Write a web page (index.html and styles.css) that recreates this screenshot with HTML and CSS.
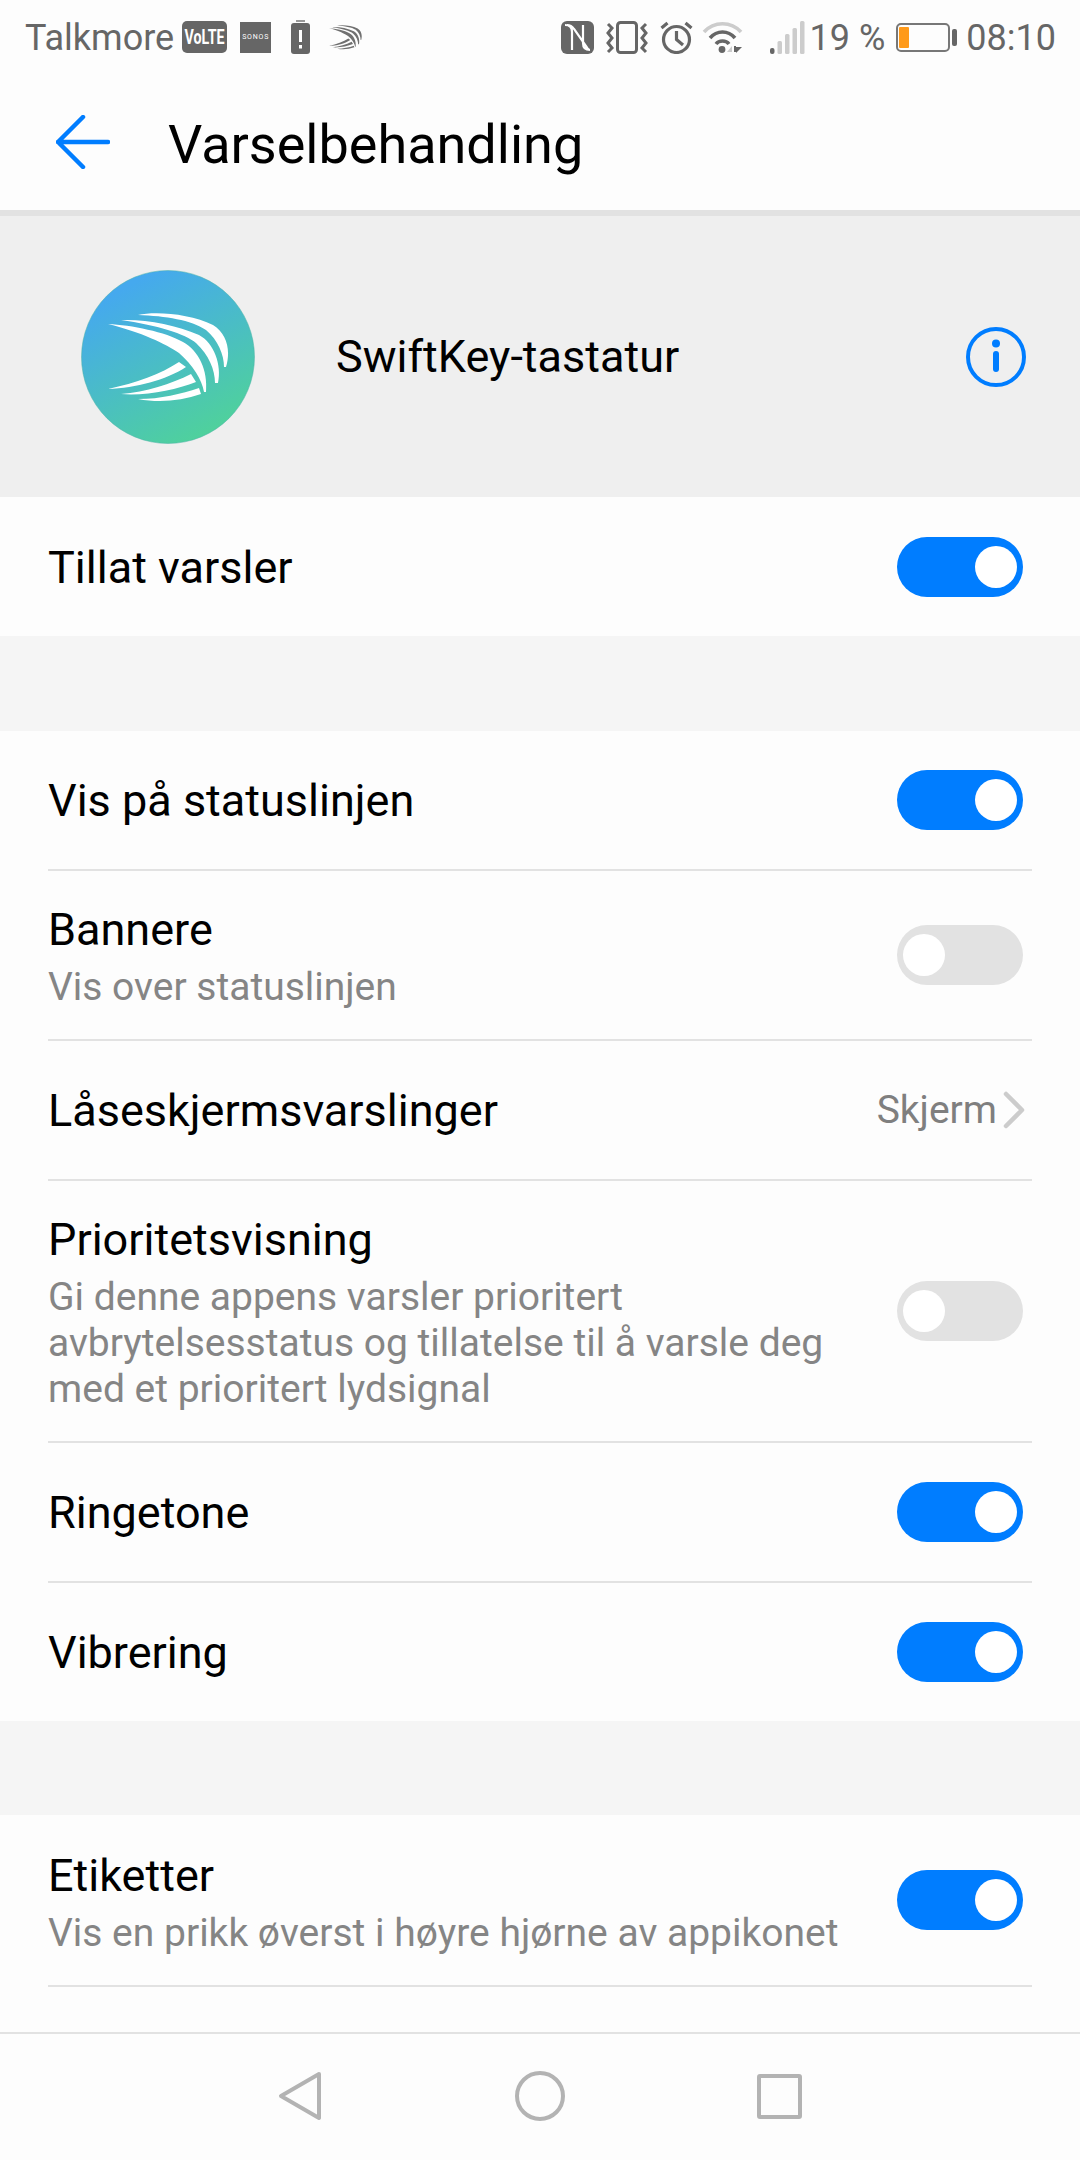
FILE: index.html
```html
<!DOCTYPE html>
<html lang="no">
<head>
<meta charset="utf-8">
<title>Varselbehandling</title>
<link rel="stylesheet" href="styles.css">
</head>
<body>
<svg class="defs" width="0" height="0">
  <symbol id="swift" viewBox="27 43 121 90">
    <path d="M27 54C50 55 85 62 102 72C118 81 127 100 125 122L123 122C121 110 112 95 98 83C85 74 60 62 27 54Z"/>
    <path d="M40 50C65 49 95 55 118 65C133 73 141 95 137 113L134 113C134 100 128 85 115 73C105 64 75 55 40 50Z"/>
    <path d="M57 45C75 41 110 44 132 55C146 64 150 80 145 97L143 97C143 85 137 70 125 60C110 50 85 46 57 45Z"/>
    <path d="M27 119C55 113 80 104 98 92L105 97C85 110 55 118 27 119Z"/>
    <path d="M40 124C65 122 90 114 110 104L115 112C95 120 65 126 40 124Z"/>
    <path d="M57 129C80 129 100 124 118 118L120 124C100 131 78 133 57 129Z"/>
  </symbol>
</svg>
<div class="phone">
  <div class="status">
    <span class="carrier">Talkmore</span>
    <span class="volte"><span class="volte-text">VoLTE</span></span>
    <span class="sonos">SONOS</span>
    <svg class="ic-batalert" viewBox="0 0 19 34"><rect x="5" y="0" width="9" height="2" fill="#999"/><rect x="0" y="3" width="19" height="31" rx="3" fill="#666"/><rect x="8" y="10" width="3" height="12" fill="#fff"/><rect x="8" y="25" width="3" height="3.5" fill="#fff"/></svg>
    <svg class="ic-swift"><use href="#swift"/></svg>
    <span class="status-gap"></span>
    <svg class="ic-nfc" viewBox="0 0 33 33"><rect width="33" height="33" rx="6" fill="#666"/><path d="M4 4C9 4 11 6 11 11V29M29 29C24 29 22 27 22 22V4M6 4C9 4 11 5 13 8L25 25C26 27 27 29 29 29" fill="none" stroke="#fff" stroke-width="2.2"/></svg>
    <svg class="ic-vibrate" viewBox="0 0 42 33" fill="none" stroke="#666" stroke-width="3"><rect x="11.5" y="1.5" width="19" height="30" rx="3"/><path d="M2 3L6 7L2 12L6 17L2 22L6 27L2 31M40 3L36 7L40 12L36 17L40 22L36 27L40 31" stroke-width="3"/></svg>
    <svg class="ic-alarm" viewBox="0 0 33 33" fill="none" stroke="#666" stroke-width="3.2"><circle cx="16.5" cy="18.5" r="13"/><path d="M16.5 10V18.5L23 24M1.5 7L7.5 2M31.5 7L25.5 2"/></svg>
    <svg class="ic-wifi" viewBox="0 0 41 32" fill="none" stroke-width="3.6"><path d="M2 11C12 0 29 0 39 11" stroke="#ccc"/><path d="M8 17C15 9 26 9 33 17" stroke="#666"/><path d="M14 23C17 19 24 19 27 23" stroke="#666"/><circle cx="20" cy="28.5" r="3.4" fill="#666" stroke="none"/><path d="M30 25L25 31H30Z" fill="#ccc" stroke="none"/><rect x="32" y="25" width="2" height="6" fill="#666" stroke="none"/><path d="M34 26H40L34 32Z" fill="#666" stroke="none"/></svg>
    <svg class="ic-signal" viewBox="0 0 35 33"><rect x="0" y="27" width="4.5" height="6" rx="2" fill="#666"/><rect x="7.5" y="20" width="4.5" height="13" rx="1.5" fill="#ccc"/><rect x="15" y="13" width="4.5" height="20" rx="1.5" fill="#ccc"/><rect x="22.5" y="7" width="4.5" height="26" rx="1.5" fill="#ccc"/><rect x="30" y="0" width="4.5" height="33" rx="1.5" fill="#ccc"/></svg>
    <span class="pct">19 %</span>
    <svg class="ic-battery" viewBox="0 0 61 29"><rect x="1" y="1" width="52" height="27" rx="4" fill="none" stroke="#777" stroke-width="2"/><rect x="3" y="4" width="10" height="21" rx="1" fill="#ff9a1a"/><rect x="56" y="6" width="5" height="17" rx="2" fill="#666"/></svg>
    <span class="clock">08:10</span>
  </div>

  <header class="appbar">
    <svg class="back" viewBox="0 0 54 54" fill="none" stroke="#007dff" stroke-width="4.5" stroke-linecap="round" stroke-linejoin="round"><path d="M27 2L2 27L27 52M2 27H52"/></svg>
    <h1 class="title">Varselbehandling</h1>
  </header>

  <div class="scroll">
    <section class="apphead">
      <svg class="logo" viewBox="0 0 174 174">
        <defs><linearGradient id="lg" x1="0.25" y1="0.1" x2="0.72" y2="0.95"><stop offset="0" stop-color="#45a9ee"/><stop offset="1" stop-color="#4fd19c"/></linearGradient></defs>
        <circle cx="87" cy="87" r="86.5" fill="url(#lg)" stroke="#4bb3a8" stroke-opacity=".5"/>
        <svg class="logo-mark" x="27" y="43" width="121" height="90"><use href="#swift" width="121" height="90"/></svg>
      </svg>
      <span class="appname">SwiftKey-tastatur</span>
      <svg class="info" viewBox="0 0 60 60"><circle cx="30" cy="30" r="28" fill="none" stroke="#007dff" stroke-width="4"/><circle cx="30" cy="16.5" r="4" fill="#007dff"/><rect x="27" y="24" width="6" height="21" rx="3" fill="#007dff"/></svg>
    </section>

    <section class="group">
      <div class="row"><div class="text"><div class="label">Tillat varsler</div></div><span class="toggle on"></span></div>
    </section>

    <section class="group">
      <div class="row"><div class="text"><div class="label">Vis på statuslinjen</div></div><span class="toggle on"></span></div>
      <div class="row"><div class="text two"><div class="label">Bannere</div><div class="sub">Vis over statuslinjen</div></div><span class="toggle"></span></div>
      <div class="row"><div class="text"><div class="label">Låseskjermsvarslinger</div></div><span class="value">Skjerm</span><svg class="chev" viewBox="0 0 22 38" fill="none" stroke="#ccc" stroke-width="4.5" stroke-linecap="round" stroke-linejoin="round"><path d="M3 3L19 19L3 35"/></svg></div>
      <div class="row"><div class="text two"><div class="label">Prioritetsvisning</div><div class="sub">Gi denne appens varsler prioritert avbrytelsesstatus og tillatelse til å varsle deg med et prioritert lydsignal</div></div><span class="toggle"></span></div>
      <div class="row"><div class="text"><div class="label">Ringetone</div></div><span class="toggle on"></span></div>
      <div class="row"><div class="text"><div class="label">Vibrering</div></div><span class="toggle on"></span></div>
    </section>

    <section class="group tail">
      <div class="row"><div class="text two"><div class="label">Etiketter</div><div class="sub">Vis en prikk øverst i høyre hjørne av appikonet</div></div><span class="toggle on"></span></div>
    </section>
  </div>

  <nav class="navbar">
    <svg class="nav-back" viewBox="0 0 44 50" fill="none" stroke="#b3b3b3" stroke-width="4" stroke-linejoin="round"><path d="M41 3L3 25L41 47Z"/></svg>
    <svg class="nav-home" viewBox="0 0 50 50" fill="none" stroke="#b3b3b3" stroke-width="4"><circle cx="25" cy="25" r="23"/></svg>
    <svg class="nav-recent" viewBox="0 0 45 45" fill="none" stroke="#b3b3b3" stroke-width="4" stroke-linejoin="round"><rect x="2" y="2" width="41" height="41" rx="1"/></svg>
  </nav>
</div>
</body>
</html>
```

FILE: styles.css
```css
* { box-sizing: border-box; }
html, body { margin: 0; padding: 0; }
body { width: 1080px; height: 2160px; overflow: hidden; font-family: Roboto, "Liberation Sans", sans-serif; background: #fdfdfd; }
.defs { display: block; height: 0; }
.phone { display: flex; flex-direction: column; height: 2160px; }

.status { height: 74px; padding: 0 24px 0 25px; display: flex; align-items: center; color: #666; font-size: 36px; flex: none; }
.status svg { flex: none; display: block; }
.status-gap { flex: 1; }
.carrier { margin-right: 8px; padding-top: 2px; }
.volte { width: 45px; height: 32px; border-radius: 5px; background: #666; color: #fff; display: flex; align-items: center; justify-content: center; overflow: hidden; }
.volte-text { font-size: 21px; font-weight: 700; line-height: 32px; transform: scaleX(.68); }
.sonos { width: 31px; height: 31px; margin-left: 13px; background: #666; color: #fff; font-size: 7px; line-height: 31px; text-align: center; letter-spacing: .8px; white-space: nowrap; overflow: hidden; }
.ic-batalert { width: 19px; height: 34px; margin-left: 20px; }
.ic-swift { width: 33px; height: 25px; margin-left: 19px; fill: #707070; }
.ic-nfc { width: 33px; height: 33px; }
.ic-vibrate { width: 42px; height: 33px; margin-left: 12px; }
.ic-alarm { width: 33px; height: 33px; margin-left: 12px; }
.ic-wifi { width: 41px; height: 32px; margin-left: 9px; }
.ic-signal { width: 35px; height: 33px; margin-left: 27px; }
.pct { margin-left: 5px; padding-top: 2px; }
.ic-battery { width: 61px; height: 29px; margin-left: 11px; }
.clock { margin-left: 9px; padding-top: 2px; }

.appbar { height: 142px; display: flex; align-items: center; padding-left: 56px; border-bottom: 6px solid #e2e2e2; flex: none; }
.back { width: 54px; height: 54px; }
.title { margin: 4px 0 0 58px; font-size: 54px; font-weight: 400; color: #000; }

.scroll { flex: 1; overflow: hidden; background: #f5f5f5; }
.apphead { height: 281px; background: #efefef; display: flex; align-items: center; padding: 0 54px 0 81px; }
.logo { width: 174px; height: 174px; flex: none; }
.logo-mark { fill: #fff; }
.appname { margin-left: 81px; flex: 1; font-size: 45px; color: #000; }
.info { width: 60px; height: 60px; }

.group { background: #fdfdfd; margin-bottom: 95px; }
.group + .group { margin-bottom: 94px; }
.group.tail { margin-bottom: 0; padding-bottom: 200px; }
.row { margin: 0 48px; min-height: 140px; padding: 0 9px 0 0; display: flex; align-items: center; }
.row:first-child { min-height: 138px; }
.row:only-child { min-height: 139px; }
.row + .row { border-top: 2px solid #e2e2e2; }
.tail .row { border-bottom: 2px solid #e2e2e2; min-height: 172px; }
.text { flex: 1; min-width: 0; padding-top: 2px; }
.text.two { padding: 34px 0 29px; }
.tail .text.two { padding-top: 36px; }
.label { font-size: 45px; line-height: 50px; color: #000; }
.sub { font-size: 39px; line-height: 46px; color: #858585; margin-top: 9px; max-width: 800px; }
.value { font-size: 39px; color: #7f7f7f; margin-right: 6px; }
.chev { width: 22px; height: 38px; margin-right: -2px; }

.toggle { width: 126px; height: 60px; border-radius: 30px; background: #e2e2e2; position: relative; flex: none; margin-left: 40px; }
.toggle::after { content: ""; position: absolute; top: 9px; left: 6px; width: 42px; height: 42px; border-radius: 50%; background: #fff; }
.toggle.on { background: #007dff; }
.toggle.on::after { left: 78px; }

.navbar { height: 128px; flex: none; background: #fdfdfd; border-top: 2px solid #e2e2e2; display: flex; align-items: center; padding: 0 0 2px 278px; }
.nav-back { width: 44px; height: 50px; }
.nav-home { width: 50px; height: 50px; margin-left: 193px; }
.nav-recent { width: 45px; height: 45px; margin-left: 192px; }
```
